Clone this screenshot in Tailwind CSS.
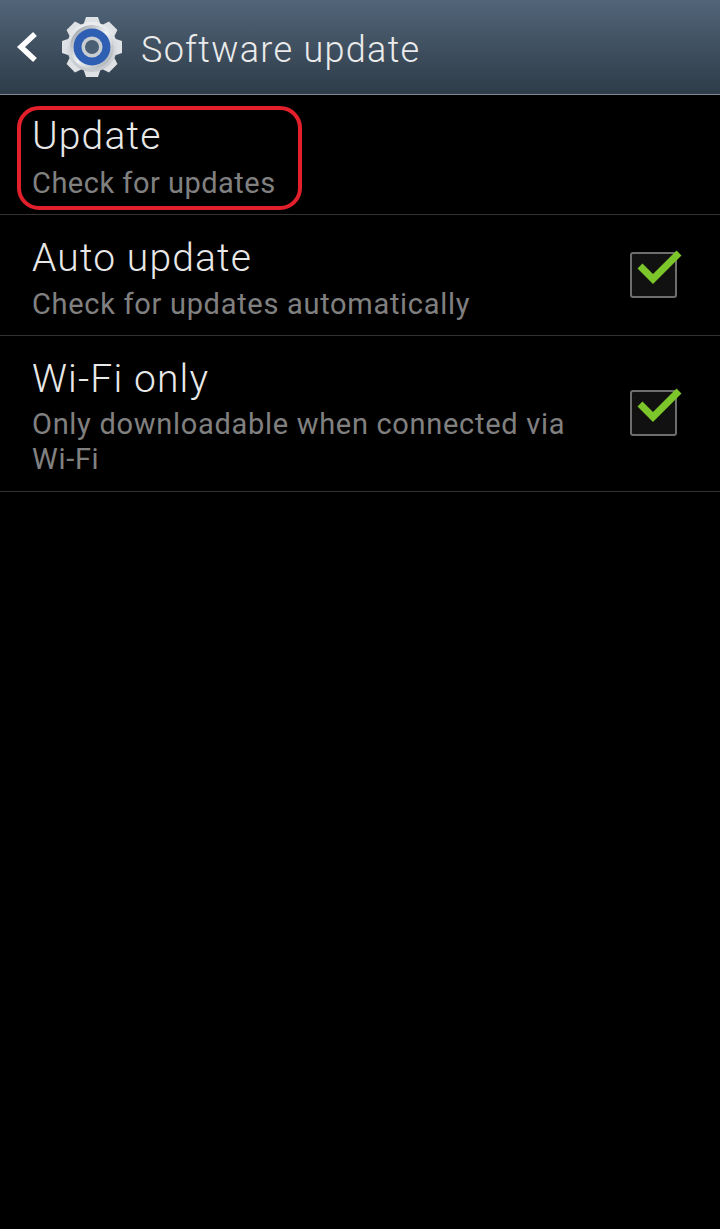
<!DOCTYPE html>
<html lang="en">
<head>
    <meta charset="UTF-8">
    <title>Software update</title>
    <script src="https://cdn.jsdelivr.net/npm/@tailwindcss/browser@4"></script>
</head>
<body class="relative w-[720px] h-[1229px] overflow-hidden bg-black font-[Roboto,sans-serif]">
    <!-- Title bar -->
    <header class="h-[95px] flex items-center border-b border-[#7d8a96] bg-gradient-to-b from-[#526579] to-[#2e3c49]">
        <svg class="ml-[16px] w-[24px] h-[36px]" viewBox="0 0 24 36">
            <path d="M19 5 L5 18 L19 31" fill="none" stroke="#fff" stroke-width="5.5"/>
        </svg>
        <svg class="ml-[20px] w-[64px] h-[64px]" viewBox="0 0 64 64">
            <defs>
                <linearGradient id="gearFill" x1="0" y1="0" x2="0" y2="1">
                    <stop offset="0" stop-color="#eceef0"/>
                    <stop offset="1" stop-color="#c4c8cc"/>
                </linearGradient>
                <linearGradient id="ringFill" x1="0" y1="0" x2="1" y2="1">
                    <stop offset="0" stop-color="#8d949c"/>
                    <stop offset="0.5" stop-color="#f0f2f4"/>
                    <stop offset="1" stop-color="#9aa1a8"/>
                </linearGradient>
            </defs>
            <g fill="#dfe2e5">
                <path d="M26 2 H38 L41 11 H23 Z"/>
                <path d="M26 2 H38 L41 11 H23 Z" transform="rotate(45 32 32)"/>
                <path d="M26 2 H38 L41 11 H23 Z" transform="rotate(90 32 32)"/>
                <path d="M26 2 H38 L41 11 H23 Z" transform="rotate(135 32 32)"/>
                <path d="M26 2 H38 L41 11 H23 Z" transform="rotate(180 32 32)"/>
                <path d="M26 2 H38 L41 11 H23 Z" transform="rotate(225 32 32)"/>
                <path d="M26 2 H38 L41 11 H23 Z" transform="rotate(270 32 32)"/>
                <path d="M26 2 H38 L41 11 H23 Z" transform="rotate(315 32 32)"/>
            </g>
            <circle cx="32" cy="32" r="25" fill="url(#gearFill)"/>
            <circle cx="32" cy="32" r="22" fill="url(#ringFill)"/>
            <circle cx="32" cy="32" r="18.5" fill="#2f5fb3"/>
            <circle cx="32" cy="32" r="10.5" fill="#c9ced3"/>
            <circle cx="32" cy="32" r="7" fill="#4a5f74"/>
        </svg>
        <h1 class="ml-[17px] pt-[5px] text-[36px] leading-none font-light text-[#ebebeb] tracking-[1.3px]">Software update</h1>
    </header>

    <!-- Settings rows -->
    <div class="h-[120px] flex items-center border-b border-[#333] pl-[32px]">
        <div class="pt-[6px]">
            <p class="text-[39px] leading-[44px] font-light text-[#e8e8e8] tracking-[1.15px]">Update</p>
            <p class="text-[29px] leading-[36px] mt-[7px] text-[#808080] tracking-[0.5px]">Check for updates</p>
        </div>
    </div>
    <div class="h-[121px] flex items-center justify-between border-b border-[#333] pl-[32px] pr-[38px]">
        <div class="pt-[7px]">
            <p class="text-[39px] leading-[44px] font-light text-[#e8e8e8] tracking-[1.15px]">Auto update</p>
            <p class="text-[29px] leading-[36px] mt-[6px] text-[#808080] tracking-[0.7px]">Check for updates automatically</p>
        </div>
        <svg class="w-[52px] h-[50px] mb-[3px] shrink-0" viewBox="0 0 52 50">
            <rect x="1" y="4" width="45" height="44" rx="2" fill="#111" stroke="#6e6e6e" stroke-width="2"/>
            <path d="M10 17 L23 30 L49 4" fill="none" stroke="#7cc62b" stroke-width="7"/>
        </svg>
    </div>
    <div class="h-[156px] flex items-center justify-between border-b border-[#333] pl-[32px] pr-[38px]">
        <div class="w-[560px] pt-[6px]">
            <p class="text-[39px] leading-[44px] font-light text-[#e8e8e8] tracking-[1.15px]">Wi-Fi only</p>
            <p class="text-[29px] leading-[35px] mt-[6px] text-[#808080] tracking-[0.7px]">Only downloadable when connected via Wi-Fi</p>
        </div>
        <svg class="w-[52px] h-[50px] mb-[3px] shrink-0" viewBox="0 0 52 50">
            <rect x="1" y="4" width="45" height="44" rx="2" fill="#111" stroke="#6e6e6e" stroke-width="2"/>
            <path d="M10 17 L23 30 L49 4" fill="none" stroke="#7cc62b" stroke-width="7"/>
        </svg>
    </div>

    <!-- Red annotation over the first row -->
    <div class="absolute left-[17px] top-[106px] w-[285px] h-[104px] rounded-[22px] border-[4px] border-[#e2202c]"></div>
</body>
</html>
